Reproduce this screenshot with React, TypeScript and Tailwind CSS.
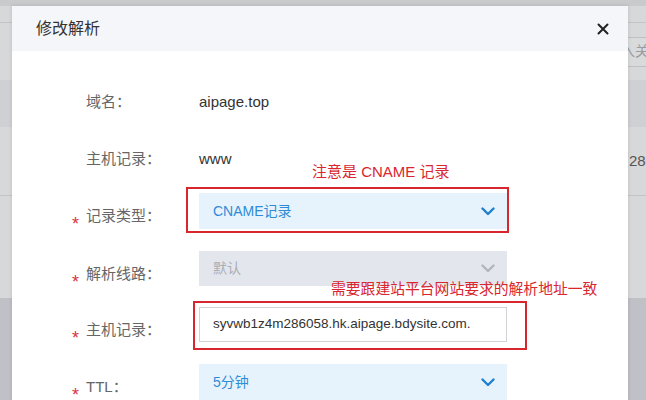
import React from "react";

const font = { fontFamily: '"Liberation Sans", "Noto Sans CJK SC", sans-serif' };

const Chevron = ({ color }: { color: string }) => (
  <svg width="14" height="9" viewBox="0 0 14 9" fill="none">
    <polyline points="1.5,1.5 7,7 12.5,1.5" stroke={color} strokeWidth="2.4" strokeLinecap="round" strokeLinejoin="round" />
  </svg>
);

const Star = () => (
  <div className="w-[14px] shrink-0 pt-[22px] text-[18px] leading-none text-[#d9363e]">*</div>
);

/* one form row: optional star, label, field */
const Row = ({ label, star, field, className }: { label: string; star?: boolean; field: React.ReactNode; className: string }) => (
  <div className={`flex pl-[60px] ${className}`}>
    {star ? <Star /> : <div className="w-[14px] shrink-0" />}
    <div className={`w-[113px] shrink-0 text-[15px] text-[#666] ${star ? "pt-[14px] leading-[18px]" : "leading-[36px]"}`}>{label}</div>
    {field}
  </div>
);

export default function App() {
  return (
    <div style={font} className="relative h-[400px] w-[646px] overflow-hidden bg-[#d7d8da]">
      {/* page under the overlay */}
      <div className="flex flex-col">
        <div className="h-[6px] bg-[#c9cacc]" />
        <div className="h-[16px]" />
        <div className="h-px bg-[#c3c4c7]" />
        <div className="flex h-[57px] items-center justify-end">
          <div className="mr-[-40px] flex h-[30px] w-[80px] items-center border border-[#bfc0c3] bg-[#d9dadc] text-[14px] text-[#9a9b9e]">
            <span className="whitespace-nowrap">输入关键字</span>
          </div>
        </div>
        <div className="h-[47px] bg-[#cfd0d3]" />
        <div className="flex h-[68px] items-center justify-end">
          <span className="mr-[-33px] text-[15px] text-[#555]">286058</span>
        </div>
        <div className="h-px bg-[#c3c4c7]" />
        <div className="h-[102px]" />
        <div className="h-[102px] bg-[#bfc1c6]" />
      </div>

      {/* dialog */}
      <div className="absolute left-[12px] top-[6px] h-[420px] w-[616px] bg-white shadow-[0_0_4px_rgba(0,0,0,0.12)]">
        <div className="flex h-[45px] items-center justify-between bg-[#f5f6fa] pl-[24px] pr-[19px]">
          <span className="text-[16px] text-[#333]">修改解析</span>
          <svg width="12" height="12" viewBox="0 0 12 12">
            <path d="M1.5 1.5 L10.5 10.5 M10.5 1.5 L1.5 10.5" stroke="#222" strokeWidth="2" strokeLinecap="round" />
          </svg>
        </div>

        <div className="flex flex-col pt-[33px]">
          <Row className="h-[36px]" label="域名：" field={<div className="text-[15px] leading-[36px] text-[#333]">aipage.top</div>} />
          <Row className="mt-[21px] h-[36px]" label="主机记录：" field={<div className="text-[15px] leading-[36px] text-[#333]">www</div>} />
          <Row
            className="mt-[16px] h-[36px]"
            star
            label="记录类型："
            field={
              <div className="flex h-[36px] w-[308px] items-center justify-between bg-[#e7f3fc] pl-[14px] pr-[12px] text-[14px] text-[#2f8bd6]">
                <span>CNAME记录</span>
                <Chevron color="#1f7fd0" />
              </div>
            }
          />
          <Row
            className="mt-[22px] h-[35px]"
            star
            label="解析线路："
            field={
              <div className="flex h-[35px] w-[308px] items-center justify-between bg-[#e4e6ed] pl-[14px] pr-[12px] text-[14px] text-[#abaeb5]">
                <span>默认</span>
                <Chevron color="#b3b5bb" />
              </div>
            }
          />
          <Row
            className="mt-[21px] h-[35px]"
            star
            label="主机记录："
            field={
              <div className="flex h-[35px] w-[308px] items-center border border-[#d2d3d6] bg-white pl-[13px] text-[13.5px] text-[#333]">
                syvwb1z4m286058.hk.aipage.bdysite.com.
              </div>
            }
          />
          <Row
            className="mt-[22px] h-[36px]"
            star
            label="TTL："
            field={
              <div className="flex h-[36px] w-[308px] items-center justify-between bg-[#e7f3fc] pl-[14px] pr-[12px] text-[14px] text-[#2f8bd6]">
                <span>5分钟</span>
                <Chevron color="#1f7fd0" />
              </div>
            }
          />
        </div>

        {/* red annotations drawn over the form */}
        <div className="absolute left-[300px] top-[157px] text-[15px] leading-[18px] text-[#d9262f] whitespace-nowrap">注意是 CNAME 记录</div>
        <div className="absolute left-[174px] top-[181px] h-[46px] w-[323px] border-2 border-[#d8262f]" />
        <div className="absolute left-[319px] top-[274px] text-[14.8px] leading-[18px] text-[#d9262f] whitespace-nowrap">需要跟建站平台网站要求的解析地址一致</div>
        <div className="absolute left-[181px] top-[295px] h-[49px] w-[334px] border-2 border-[#d8262f]" />
      </div>
    </div>
  );
}
